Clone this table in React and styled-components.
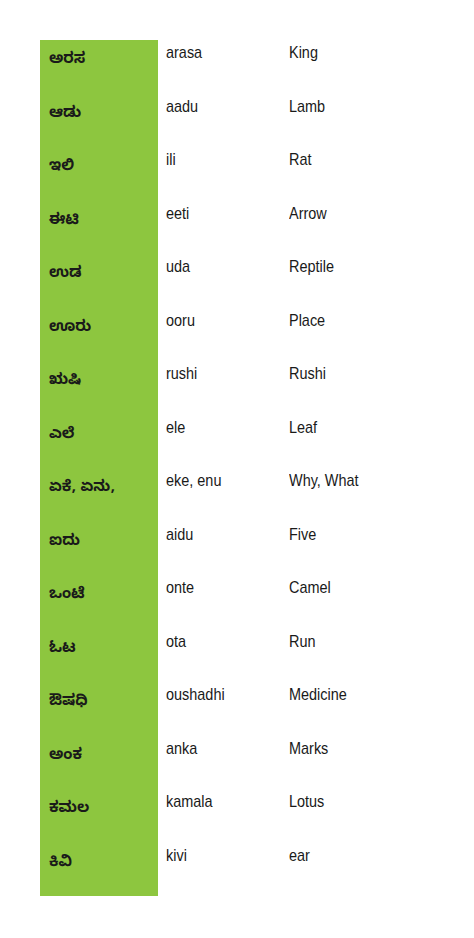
import React from "react";
import styled, { createGlobalStyle } from "styled-components";

const words = [
  ["ಅರಸ", "arasa", "King"],
  ["ಆಡು", "aadu", "Lamb"],
  ["ಇಲಿ", "ili", "Rat"],
  ["ಈಟಿ", "eeti", "Arrow"],
  ["ಉಡ", "uda", "Reptile"],
  ["ಊರು", "ooru", "Place"],
  ["ಋಷಿ", "rushi", "Rushi"],
  ["ಎಲೆ", "ele", "Leaf"],
  ["ಏಕೆ, ಏನು,", "eke, enu", "Why, What"],
  ["ಐದು", "aidu", "Five"],
  ["ಒಂಟೆ", "onte", "Camel"],
  ["ಓಟ", "ota", "Run"],
  ["ಔಷಧಿ", "oushadhi", "Medicine"],
  ["ಅಂಕ", "anka", "Marks"],
  ["ಕಮಲ", "kamala", "Lotus"],
  ["ಕಿವಿ", "kivi", "ear"],
];

const GlobalStyle = createGlobalStyle`
  body {
    margin: 0;
    background: #fff;
  }
`;

const Page = styled.div`
  padding: 40px 0 42px 40px;
`;

const Table = styled.div`
  display: grid;
  grid-template-columns: 118px 131px 1fr;
  grid-auto-rows: 53.5px;
`;

const KannadaCell = styled.div`
  background: #8dc63f;
  padding: 11px 0 0 9px;
  font-family: "Noto Sans Kannada", "Lohit Kannada", "Noto Sans", sans-serif;
  font-weight: 700;
  font-size: 15px;
  line-height: 20px;
  color: #1a1a1a;
  white-space: nowrap;
`;

const Cell = styled.div`
  padding: 3px 0 0 ${({ $indent }) => $indent}px;
  white-space: nowrap;
`;

// condensed sans: no narrow face installed, so squeeze Liberation Sans
const Word = styled.span`
  display: inline-block;
  font-family: "Liberation Sans", Arial, sans-serif;
  font-size: 17px;
  line-height: 20px;
  color: #1a1a1a;
  transform: scaleX(0.85);
  transform-origin: left center;
`;

export default function App() {
  return (
    <>
      <GlobalStyle />
      <Page>
        <Table>
          {words.map(([kn, tr, en]) => (
            <React.Fragment key={tr}>
              <KannadaCell>{kn}</KannadaCell>
              <Cell $indent={8}>
                <Word>{tr}</Word>
              </Cell>
              <Cell $indent={0}>
                <Word>{en}</Word>
              </Cell>
            </React.Fragment>
          ))}
        </Table>
      </Page>
    </>
  );
}
